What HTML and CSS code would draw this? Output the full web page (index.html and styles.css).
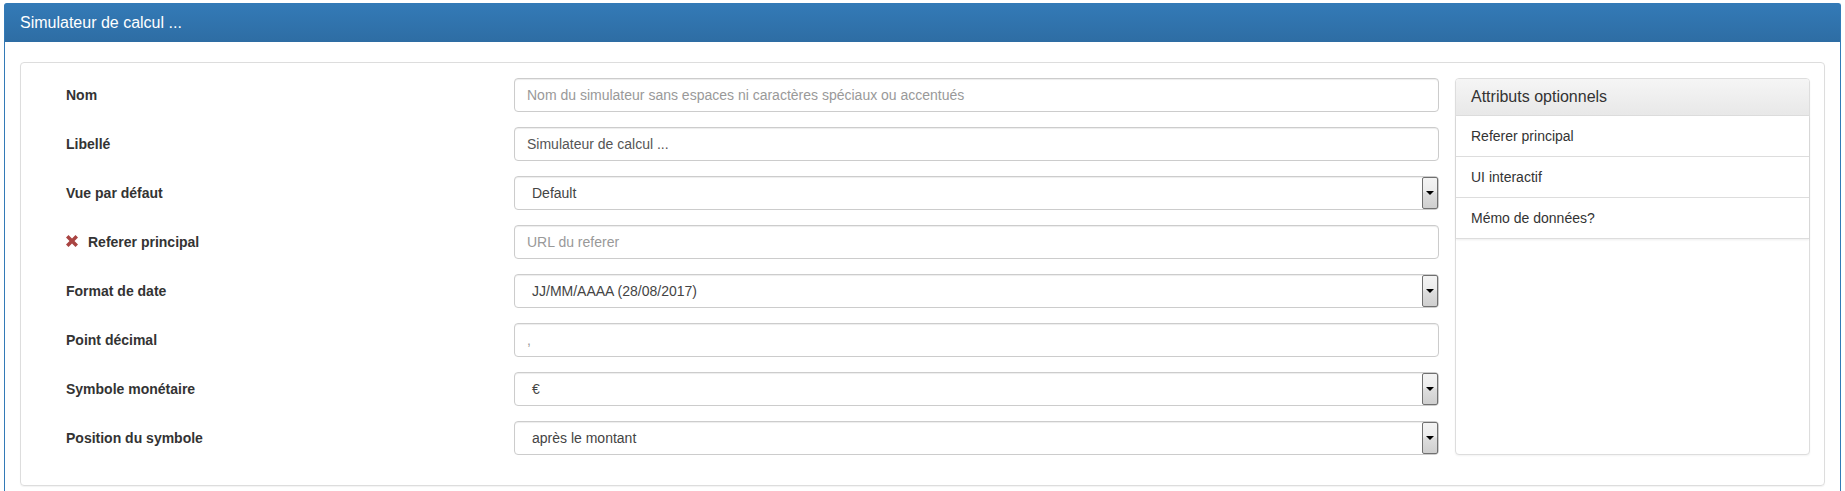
FILE: index.html
```html
<!DOCTYPE html>
<html lang="fr">
<head>
<meta charset="utf-8">
<title>Simulateur de calcul</title>
<link rel="stylesheet" href="styles.css">
</head>
<body>
<div class="panel">
  <div class="panel-heading"><h3 class="panel-title">Simulateur de calcul ...</h3></div>
  <div class="panel-body">
    <div class="well">
      <form class="form">
        <div class="form-group">
          <label class="control-label">Nom</label>
          <div class="control"><input class="form-control" type="text" placeholder="Nom du simulateur sans espaces ni caractères spéciaux ou accentués"></div>
        </div>
        <div class="form-group">
          <label class="control-label">Libellé</label>
          <div class="control"><input class="form-control" type="text" value="Simulateur de calcul ..."></div>
        </div>
        <div class="form-group">
          <label class="control-label">Vue par défaut</label>
          <div class="control"><div class="select"><span class="select-value">Default</span><span class="select-btn"><span class="caret"></span></span></div></div>
        </div>
        <div class="form-group">
          <label class="control-label"><svg class="remove-icon" width="12" height="12" viewBox="0 0 12 12"><polygon points="0,2.5 2.5,0 6,3.5 9.5,0 12,2.5 8.5,6 12,9.5 9.5,12 6,8.5 2.5,12 0,9.5 3.5,6" fill="#a94442"/></svg>Referer principal</label>
          <div class="control"><input class="form-control" type="text" placeholder="URL du referer"></div>
        </div>
        <div class="form-group">
          <label class="control-label">Format de date</label>
          <div class="control"><div class="select"><span class="select-value">JJ/MM/AAAA (28/08/2017)</span><span class="select-btn"><span class="caret"></span></span></div></div>
        </div>
        <div class="form-group">
          <label class="control-label">Point décimal</label>
          <div class="control"><input class="form-control" type="text" placeholder=","></div>
        </div>
        <div class="form-group">
          <label class="control-label">Symbole monétaire</label>
          <div class="control"><div class="select"><span class="select-value">€</span><span class="select-btn"><span class="caret"></span></span></div></div>
        </div>
        <div class="form-group">
          <label class="control-label">Position du symbole</label>
          <div class="control"><div class="select"><span class="select-value">après le montant</span><span class="select-btn"><span class="caret"></span></span></div></div>
        </div>
      </form>
      <div class="side-panel">
        <div class="side-heading"><h4 class="side-title">Attributs optionnels</h4></div>
        <ul class="list-group">
          <li class="list-group-item">Referer principal</li>
          <li class="list-group-item">UI interactif</li>
          <li class="list-group-item">Mémo de données?</li>
        </ul>
      </div>
    </div>
  </div>
</div>
</body>
</html>
```
FILE: styles.css
```css
* { box-sizing: border-box; }
html, body { margin: 0; padding: 0; background: #fff; }
body {
  font-family: "Liberation Sans", Arial, sans-serif;
  font-size: 14px;
  line-height: 20px;
  color: #333;
}
.panel {
  margin: 3px 4px 0 4px;
  border: 1px solid #337ab7;
  border-radius: 4px;
  background: #fff;
}
.panel-heading {
  background: linear-gradient(to bottom, #337ab7 0%, #2e6da4 100%);
  color: #fff;
  padding: 10px 15px;
  border-radius: 3px 3px 0 0;
  margin: -1px -1px 0 -1px;
  border: 1px solid #337ab7;
  border-bottom: 0;
}
.panel-title {
  margin: 0;
  font-size: 16px;
  font-weight: normal;
  line-height: 18px;
}
.panel-body {
  padding: 20px 15px 15px 15px;
}
.well {
  display: flex;
  gap: 16px;
  border: 1px solid #ddd;
  border-radius: 4px;
  padding: 15px 14px 15px 15px;
  box-shadow: 0 1px 1px rgba(0,0,0,.05);
}
.form { flex: 1; margin: 0; }
.form-group {
  display: flex;
  margin-bottom: 15px;
}
.control-label {
  width: 478px;
  flex: none;
  padding: 7px 0 0 30px;
  font-weight: bold;
  line-height: 20px;
  display: flex;
  align-items: flex-start;
}
.remove-icon {
  margin: 3px 10px 0 0;
  flex: none;
}
.control { flex: 1; }
.form-control {
  display: block;
  width: 100%;
  height: 34px;
  padding: 6px 12px;
  font-family: inherit;
  font-size: 14px;
  line-height: 20px;
  color: #555;
  background: #fff;
  border: 1px solid #ccc;
  border-radius: 4px;
  box-shadow: inset 0 1px 1px rgba(0,0,0,.075);
  outline: none;
}
.form-control::placeholder { color: #999; }
.select {
  display: flex;
  height: 34px;
  border: 1px solid #ccc;
  border-radius: 4px;
  background: #fff;
  box-shadow: inset 0 1px 1px rgba(0,0,0,.075);
}
.select-value {
  flex: 1;
  padding: 6px 0 0 17px;
  color: #444;
  line-height: 20px;
}
.select-btn {
  width: 16px;
  flex: none;
  border: 1px solid #707070;
  border-radius: 2px;
  background: linear-gradient(to bottom, #f4f4f4 0%, #ececec 45%, #dedede 50%, #cfcfcf 100%);
  display: flex;
  align-items: center;
  justify-content: center;
}
.caret {
  width: 0;
  height: 0;
  border-left: 4px solid transparent;
  border-right: 4px solid transparent;
  border-top: 4px solid #000;
}
.side-panel {
  width: 355px;
  flex: none;
  border: 1px solid #ddd;
  border-radius: 4px;
  background: #fff;
  box-shadow: 0 1px 2px rgba(0,0,0,.05);
  margin-bottom: 15px;
}
.side-heading {
  background: linear-gradient(to bottom, #f5f5f5 0%, #e8e8e8 100%);
  padding: 10px 15px;
  border-bottom: 1px solid #ddd;
  border-radius: 3px 3px 0 0;
}
.side-title {
  margin: 0;
  font-size: 16px;
  font-weight: normal;
  line-height: 16px;
  color: #333;
}
.list-group {
  list-style: none;
  margin: 0;
  padding: 0;
  box-shadow: 0 1px 2px rgba(0,0,0,.075);
}
.list-group-item {
  padding: 10px 15px;
  border-bottom: 1px solid #ddd;
  line-height: 20px;
  color: #333;
}
```
